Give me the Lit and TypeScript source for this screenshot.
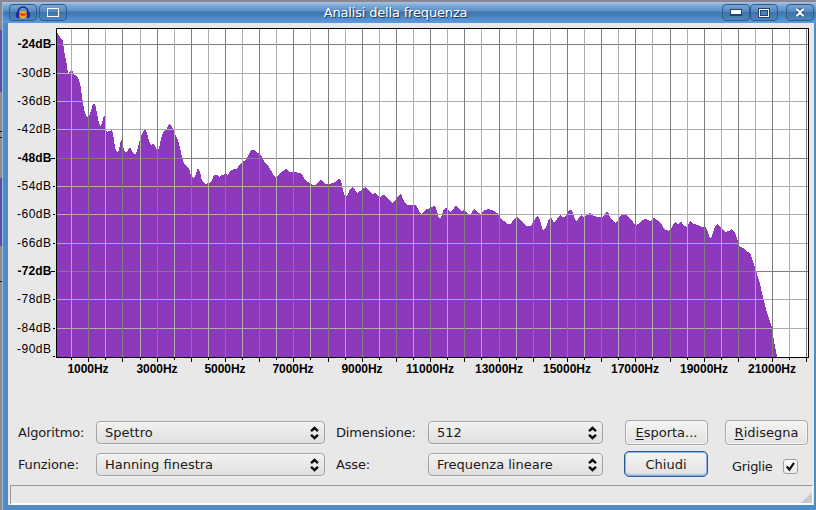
import { LitElement, html, css, svg } from "lit";
import { customElement, property } from "lit/decorators.js";
import { classMap } from "lit/directives/class-map.js";

// Spectrum envelope, x,y pairs in window pixels
const CURVE =
  "57,32 58,34 60,37 62,40 63,41 64,50 66,60 68,73 71,71 72,69 74,75 77,76 79,80 81,88 82,97 84,109 86,116 88,118 90,114 92,107 93,104 95,104 96,108 98,119 100,126 101,126 103,119 104,116 105,116 105,127 107,132 109,131 112,130 113,133 115,148 117,152 119,150 121,140 122,140 124,150 126,153 128,150 130,147 132,151 134,154 136,154 138,147 140,139 142,134 145,128 147,133 149,141 151,145 153,143 155,146 157,150 159,148 161,139 163,132 166,130 168,126 169,124 171,125 173,129 175,134 178,140 180,148 183,161 186,166 189,168 191,176 193,178 195,176 198,168 200,172 202,181 205,184 209,183 212,180 214,175 217,175 219,177 222,175 225,174 228,175 231,170 234,169 237,169 240,164 244,161 247,158 249,154 251,150 254,150 258,153 262,157 265,163 269,167 272,172 274,176 276,177 279,174 283,171 286,168 289,172 293,172 300,173 303,176 305,180 310,183 313,185 316,185 319,181 321,180 325,184 329,184 335,182 339,179 341,181 343,190 345,196 348,195 350,189 353,187 357,193 360,191 363,188 366,187 368,190 372,194 375,193 380,197 383,195 386,196 389,200 393,203 396,199 399,195 401,194 404,201 407,205 415,205 417,207 420,213 422,214 425,210 430,208 434,206 436,208 438,215 439,218 441,218 444,209 446,207 449,211 451,212 454,208 456,205 459,209 461,211 465,210 468,214 471,214 473,210 475,209 478,213 481,214 484,210 489,209 494,211 497,213 499,214 501,219 504,221 508,224 511,224 514,219 517,217 520,220 523,223 526,226 531,226 534,221 537,216 539,217 541,224 543,230 546,227 549,219 551,217 554,223 557,219 560,215 563,217 566,216 569,210 572,210 574,217 576,221 578,219 581,215 584,217 587,215 590,213 593,216 598,217 603,217 606,212 608,212 611,219 615,223 618,220 621,215 625,214 629,218 633,222 635,225 638,224 642,220 646,219 650,221 654,218 657,220 661,223 664,229 669,231 672,227 675,222 678,224 681,221 684,226 687,227 690,221 693,224 698,225 702,227 705,226 708,232 710,238 712,236 714,229 717,224 721,228 725,232 729,231 732,229 735,233 738,241 740,247 743,248 748,252 751,255 753,261 755,267 757,274 760,284 763,297 766,309 769,318 772,328 774,341 777,356";

const COLS = [71, 88, 105, 122, 140, 157, 174, 191, 208, 225, 242, 259, 276, 293, 310, 328, 345, 362, 379, 396, 413, 430, 447, 464, 481, 499, 516, 533, 550, 567, 584, 601, 618, 635, 652, 670, 687, 704, 721, 738, 755, 772, 789, 806];
const ROWS = [44, 73, 101, 129, 158, 186, 214, 243, 271, 299, 328];

@customElement("frequency-plot")
export class FrequencyPlot extends LitElement {
  static styles = css`
    :host { display: block; }
    .plot { display: block; font: 12px "Liberation Sans", Arial, sans-serif; }
    .bold { font-weight: bold; }
    .fill { fill: #8c39bd; }
    .minor { fill: #adadad; }
    .major { fill: #7e7e7e; }
  `;
  render() {
    return html`<svg class="plot" width="806" height="360" viewBox="8 23 806 360" shape-rendering="crispEdges">
      <rect x="56" y="28" width="753" height="330" fill="#000"></rect>
      <rect x="57" y="29" width="751" height="328" fill="#fff"></rect>
      <polygon class="fill" points="57,357 ${CURVE} 777,357"></polygon>
      ${ROWS.map((y, i) => svg`<rect class=${i % 4 ? "minor" : "major"} x="57" y=${y} width="751" height="1"></rect>`)}
      ${COLS.map((x, i) => (i % 2 ? null : svg`<rect class="minor" x=${x} y="29" width="1" height="328"></rect>`))}
      ${COLS.map((x, i) => (i % 2 ? svg`<rect class="major" x=${x} y="29" width="1" height="328"></rect>` : null))}
      ${COLS.map((x, i) => svg`<rect x=${x} y="358" width="1" height=${i % 2 ? 4 : 2}></rect>`)}
      ${[...ROWS, 356].map((y, i) => {
        const major = i < 11 && i % 4 === 0;
        return svg`<rect x=${major ? 51 : 53} y=${y} width=${major ? 4 : 2} height="1"></rect>
          <text class=${major ? "bold" : ""} x=${major ? 17.5 : 17} y=${i === 11 ? 353 : y + 4} textLength="34">${`-${24 + i * 6}dB`}</text>`;
      })}
      ${COLS.filter((_, i) => i % 4 === 1).map((x, i) => {
        const w = i < 5 ? 41 : 48;
        return svg`<text class="bold" x=${i < 5 ? x - 20.5 : x - 24} y="373" textLength=${w}>${1000 + i * 2000}Hz</text>`;
      })}
    </svg>`;
  }
}

@customElement("select-box")
export class SelectBox extends LitElement {
  @property() value = "";
  static styles = css`
    :host {
      display: flex; align-items: center; justify-content: space-between; box-sizing: border-box; height: 23px;
      padding: 0 5px 0 8px; border: 1px solid #a5a4a2; border-radius: 4px;
      background: linear-gradient(#f2f2f1, #e1e0de); box-shadow: inset 0 1px #fafafa, 0 1px #f3f3f3; white-space: nowrap;
    }
    .arrows { display: block; }
  `;
  render() {
    return html`<span>${this.value}</span>
      <svg class="arrows" width="9" height="14" viewBox="0 0 9 14" fill="none" stroke="#0c0c0c" stroke-width="2.4">
        <path d="M1 5.2 4.5 2 8 5.2M1 8.8 4.5 12 8 8.8"></path>
      </svg>`;
  }
}

@customElement("push-button")
export class PushButton extends LitElement {
  @property() label = "";
  @property({ type: Boolean }) focused = false;
  @property({ type: Boolean }) mnemonic = false;
  static styles = css`
    .btn {
      display: flex; align-items: center; justify-content: center; box-sizing: border-box; height: 25px;
      border: 1px solid #a7a6a4; border-radius: 4px; background: linear-gradient(#f4f4f3, #e2e1df);
      box-shadow: inset 0 0 0 1px #f6f6f6, 0 1px #f3f3f3; white-space: pre;
    }
    .key { text-decoration: underline; text-underline-offset: 2px; }
    .focused {
      height: 26px; margin: 0 0 1px -1px; border-color: #2a5a97; border-radius: 5px;
      box-shadow: inset 0 0 0 1px #8fb2dc, inset 0 -3px 1px -1px #a9c6e8, 0 1px #f3f3f3;
    }
  `;
  render() {
    return html`<div class=${classMap({ btn: true, focused: this.focused })}><span class=${this.mnemonic ? "key" : ""}>${this.label[0]}</span><span>${this.label.slice(1)}</span></div>`;
  }
}

@customElement("app-root")
export class AppRoot extends LitElement {
  static styles = css`
    :host {
      display: flex; flex-direction: column; box-sizing: border-box; width: 816px; height: 510px; overflow: hidden;
      padding: 2px 2px 5px 8px; font: 13px "DejaVu Sans", sans-serif; color: #1a1a1a;
      background:
        linear-gradient(#8b8591, #8b8591) 0 0 / 816px 2px no-repeat,
        linear-gradient(#111, #111) 0 131px / 2px 1px no-repeat,
        linear-gradient(#111, #111) 0 137px / 2px 1px no-repeat,
        linear-gradient(#111, #111) 0 281px / 2px 1px no-repeat,
        linear-gradient(#8b8591 30px, #5550a8 30px 92px, #8f8b90 92px 178px, #5550a8 178px 246px, #8f8b90 246px) 0 0 / 2px 510px no-repeat,
        linear-gradient(#9fbddb, #9fbddb) 2px 2px / 1px 508px no-repeat,
        #4f8bc7;
    }
    .titlebar {
      display: flex; align-items: center; box-sizing: border-box; height: 21px; flex: none; margin: 0 -2px 0 -5px; padding: 0 2px 0 6px;
      background: linear-gradient(#a6c5e4 0, #79a6d5 4px, #5b90c7 9px, #3f74ac 10px, #4780bd 14px, #5692d2 18px, #5c9ade);
    }
    .winbtn {
      display: grid; place-items: center; box-sizing: border-box; flex: none; width: 28px; height: 17px; border: 1px solid #2f5c8e;
      border-radius: 4px; background: linear-gradient(#7aa6d3, #5586bb 45%, #3f72a9 50%, #4c85c2);
    }
    .left { margin-right: 2px; }
    .close { margin-left: 8px; }
    .title { flex: 1; text-align: center; color: #fff; text-shadow: 1px 1px #1c3a5e; letter-spacing: -0.17px; line-height: 18px; }
    .client { flex: 1; background: #e8e8e8; display: flex; flex-direction: column; width: 806px; }
    .controls {
      display: grid; grid-template-columns: 78px 229px 103px 175px 22px 83px 17px 83px; grid-template-rows: 23px 23px;
      row-gap: 9px; align-items: center; padding: 38px 0 0 10px;
    }
    .second { padding-left: 11px; }
    .c6 { grid-column: 6; }
    .c8 { grid-column: 8; }
    .label { white-space: nowrap; letter-spacing: -0.15px; }
    .check { display: flex; align-items: center; justify-content: space-between; padding: 4px 10px 0 7px; letter-spacing: -0.3px; }
    .box { display: grid; place-items: center; box-sizing: border-box; width: 15px; height: 15px; border: 1px solid #a0a0a0; border-radius: 3px; background: linear-gradient(#fff, #ececec); }
    .status {
      display: flex; align-items: flex-end; justify-content: flex-end; box-sizing: border-box; height: 20px; flex: none; margin: 9px 1px 0 2px;
      border: solid; border-width: 1px 1px 2px 1px; border-color: #969696 #fff #fcfcfc #969696;
    }
  `;
  render() {
    return html`
      <div class="titlebar">
        <div class="winbtn left">
          <svg width="16" height="14" viewBox="0 0 16 14">
            <path d="M3 8V6a5 5 0 0 1 10 0v2" fill="none" stroke="#182a8c" stroke-width="1.6"></path>
            <ellipse cx="2.8" cy="9" rx="2" ry="3.3" fill="#1c2d98"></ellipse>
            <ellipse cx="13.2" cy="9" rx="2" ry="3.3" fill="#1c2d98"></ellipse>
            <ellipse cx="8" cy="8.7" rx="3.8" ry="3.8" fill="#ffb31c"></ellipse>
            <path d="M4.5 9 6 7.7l1 2 1-2 1 2 1-2L11.5 9" fill="none" stroke="#e33b18" stroke-width="1.2"></path>
          </svg>
        </div>
        <div class="winbtn left">
          <svg width="12" height="9"><rect x=".5" y=".5" width="11" height="8" fill="none" stroke="#fff"></rect></svg>
        </div>
        <div class="title">Analisi della frequenza</div>
        <div class="winbtn">
          <svg width="12" height="7"><rect width="12" height="7" fill="#1e4470"></rect><rect x="1" y="1" width="10" height="4" fill="#fff"></rect></svg>
        </div>
        <div class="winbtn">
          <svg width="12" height="10"><rect width="12" height="10" fill="#1e4470"></rect><rect x="1.5" y="1.5" width="9" height="7" fill="#4a80b9" stroke="#fff"></rect><rect x="2.5" y="2.5" width="7" height="5" fill="none" stroke="#1e4470"></rect></svg>
        </div>
        <div class="winbtn close">
          <svg width="12" height="9" viewBox="0 0 12 9"><path d="M2 1.5h1.5l5 6H10M10 1.5H8.5l-5 6H2" fill="none" stroke="#1e4470" stroke-width="3.6"></path><path d="M2 1.5h1.5l5 6H10M10 1.5H8.5l-5 6H2" fill="none" stroke="#fff" stroke-width="2"></path></svg>
        </div>
      </div>
      <div class="client">
        <frequency-plot></frequency-plot>
        <div class="controls">
          <span class="label">Algoritmo:</span><select-box value="Spettro"></select-box>
          <span class="label second">Dimensione:</span><select-box value="512"></select-box>
          <push-button class="c6" label="Esporta..." mnemonic></push-button>
          <push-button class="c8" label="Ridisegna" mnemonic></push-button>
          <span class="label">Funzione:</span><select-box value="Hanning finestra"></select-box>
          <span class="label second">Asse:</span><select-box value="Frequenza lineare"></select-box>
          <push-button class="c6" label="Chiudi" focused></push-button>
          <div class="check c8"><span>Griglie</span>
            <span class="box"><svg width="11" height="11" viewBox="0 0 11 11"><path d="M1.8 5.4 4.4 8.6 9 1.8" fill="none" stroke="#111" stroke-width="2.2"></path></svg></span>
          </div>
        </div>
        <div class="status"><svg width="11" height="11"><path d="M11 0v11H0z" fill="#c9c9cb"></path></svg></div>
      </div>`;
  }
}
